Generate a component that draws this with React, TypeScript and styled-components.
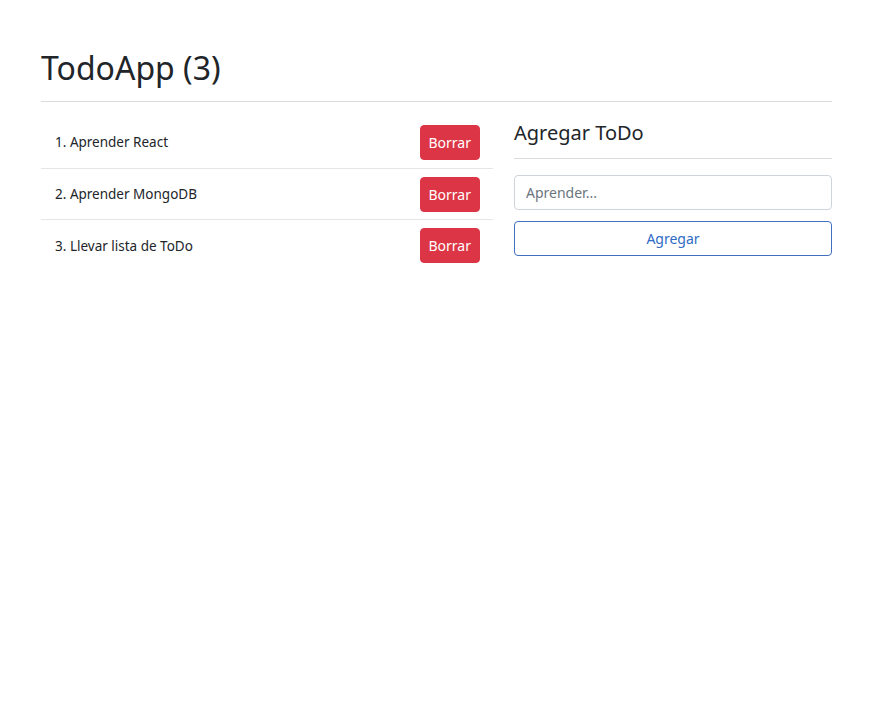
import React from 'react'
import styled, { createGlobalStyle } from 'styled-components'

const Global = createGlobalStyle`
  body {
    margin: 0;
    background: #fff;
    color: #212529;
    font-family: "Noto Sans", "Open Sans", sans-serif;
  }
  * { box-sizing: border-box; }
`

const Page = styled.div`
  width: 791px;
  margin: 0 auto;
  padding-top: 49px;
`

const Title = styled.h1`
  margin: 0;
  font-size: 32px;
  font-weight: 400;
  line-height: 1.2;
`

const Rule = styled.hr<{ $gap: number; $after: number }>`
  border: 0;
  border-top: 1px solid #dcdcdc;
  margin: ${p => p.$gap}px 0 ${p => p.$after}px;
`

const Columns = styled.div`
  display: grid;
  grid-template-columns: 452px 318px;
  column-gap: 21px;
`

const List = styled.ul`
  list-style: none;
  margin: 0;
  padding: 0;
`

const Item = styled.li`
  display: flex;
  align-items: center;
  justify-content: space-between;
  height: 51.5px;
  padding: 0 13px 0 14px;
  font-size: 13.5px;
  & + & { border-top: 1px solid #e6e6e6; }
`

const Button = styled.button<{ $variant: 'danger' | 'outline' }>`
  font-family: inherit;
  font-size: 14px;
  border-radius: 4px;
  height: 35px;
  cursor: pointer;
  ${p => p.$variant === 'danger'
    ? `background: #dc3545; color: #fff; border: 1px solid #dc3545; padding: 0 8px;`
    : `background: #fff; color: #2f6bc4; border: 1px solid #3f70c2; width: 100%;`}
`

const Side = styled.div`
  padding-top: 5px;
`

const SideTitle = styled.h3`
  margin: 0;
  font-size: 20px;
  font-weight: 400;
  line-height: 1.2;
`

const Input = styled.input`
  display: block;
  width: 100%;
  height: 35px;
  padding: 0 11px;
  border: 1px solid #ced4da;
  border-radius: 4px;
  font-family: inherit;
  font-size: 14px;
  margin-bottom: 11px;
  &::placeholder { color: #6c757d; }
`

const todos = ['Aprender React', 'Aprender MongoDB', 'Llevar lista de ToDo']

export default function App () {
  return (
    <>
      <Global />
      <Page>
        <Title>TodoApp ({todos.length})</Title>
        <Rule $gap={14} $after={14} />
        <Columns>
          <List>
            {todos.map((t, i) => (
              <Item key={t}>
                <span>{i + 1}. {t}</span>
                <Button $variant="danger">Borrar</Button>
              </Item>
            ))}
          </List>
          <Side>
            <SideTitle>Agregar ToDo</SideTitle>
            <Rule $gap={13} $after={16} />
            <Input placeholder="Aprender..." />
            <Button $variant="outline">Agregar</Button>
          </Side>
        </Columns>
      </Page>
    </>
  )
}
